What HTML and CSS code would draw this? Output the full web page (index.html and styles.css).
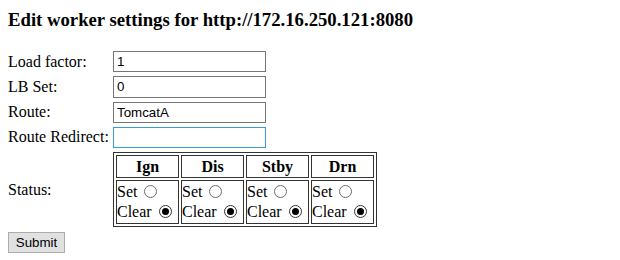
FILE: index.html
```html
<!DOCTYPE html>
<html>
<head>
<meta charset="utf-8">
<link rel="stylesheet" href="styles.css">
</head>
<body>
<h3 class="title">Edit worker settings for http://172.16.250.121:8080</h3>
<form class="form">
<table class="fields">
<tr><td class="label">Load factor:</td><td class="value"><input class="text" type="text" value="1"></td></tr>
<tr><td class="label">LB Set:</td><td class="value"><input class="text" type="text" value="0"></td></tr>
<tr><td class="label">Route:</td><td class="value"><input class="text" type="text" value="TomcatA"></td></tr>
<tr><td class="label">Route Redirect:</td><td class="value"><input class="text focused" type="text" value=""></td></tr>
<tr><td class="label">Status:</td><td class="value">
<table class="status">
<tr><th>Ign</th><th>Dis</th><th>Stby</th><th>Drn</th></tr>
<tr>
<td>Set <input class="radio" type="radio" name="a"><br>Clear <input class="radio" type="radio" name="a" checked></td>
<td>Set <input class="radio" type="radio" name="b"><br>Clear <input class="radio" type="radio" name="b" checked></td>
<td>Set <input class="radio" type="radio" name="c"><br>Clear <input class="radio" type="radio" name="c" checked></td>
<td>Set <input class="radio" type="radio" name="d"><br>Clear <input class="radio" type="radio" name="d" checked></td>
</tr>
</table>
</td></tr>
</table>
<div class="actions"><button class="submit" type="button">Submit</button></div>
</form>
</body>
</html>
```
FILE: styles.css
```css
html, body {
  margin: 0;
  padding: 0;
  background: #fff;
}
body {
  padding: 8px;
  font-family: "Liberation Serif", "Times New Roman", serif;
  font-size: 16px;
  color: #000;
}
.title {
  margin: 1px 0 19px;
  font-size: 18.72px;
  font-weight: bold;
  line-height: 22px;
}
.form {
  margin: 0;
}
.fields {
  border-collapse: separate;
  border-spacing: 0 2px;
  margin-top: -2px;
}
.label {
  width: 105px;
  padding: 0;
  white-space: nowrap;
  vertical-align: middle;
}
.value {
  padding: 1px 0;
}
.text {
  box-sizing: border-box;
  display: block;
  width: 153px;
  height: 21.25px;
  margin: 0;
  padding: 0 2px 0 3px;
  border: 1px solid #767676;
  background: #fff;
  font-family: "Liberation Sans", Arial, sans-serif;
  font-size: 13.33px;
  color: #000;
  outline: none;
}
.text.focused {
  border-color: #3a9bd9;
}
.status {
  border: 1px solid #333;
  border-collapse: separate;
  border-spacing: 2px;
}
.status th,
.status td {
  border: 1px solid #333;
  padding: 1px;
}
.status th {
  height: 19px;
  font-weight: bold;
  text-align: center;
}
.status td {
  width: 61px;
  line-height: 20px;
  padding: 1px 0;
  white-space: nowrap;
}
.radio {
  -webkit-appearance: none;
  appearance: none;
  box-sizing: border-box;
  display: inline-block;
  width: 13px;
  height: 13px;
  margin: 0 2px 0 3px;
  vertical-align: -1px;
  border: 1px solid #6d6d6d;
  border-radius: 50%;
  background: #fff;
  position: relative;
}
.radio:checked {
  border-color: #333;
}
.radio:checked::after {
  content: "";
  position: absolute;
  left: 2px;
  top: 2px;
  width: 7px;
  height: 7px;
  border-radius: 50%;
  background: #000;
}
.actions {
  margin-top: 2px;
}
.submit {
  box-sizing: border-box;
  height: 21px;
  width: 57px;
  margin: 0;
  padding: 0 6px;
  border: 1px solid #adadad;
  background: #e1e1e1;
  font-family: "Liberation Sans", Arial, sans-serif;
  font-size: 13.33px;
  color: #000;
}
```
